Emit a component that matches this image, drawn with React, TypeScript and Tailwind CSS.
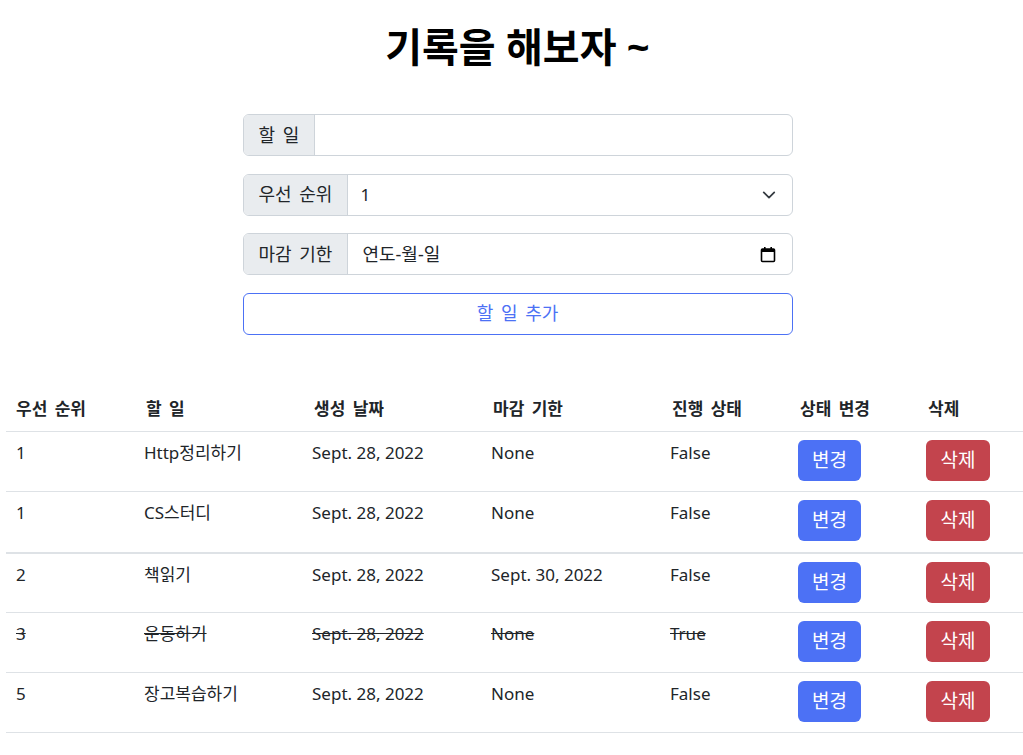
import React from 'react';

type Todo = {
  priority: number;
  title: string;
  created: string;
  due: string;
  done: boolean;
};

const todos: Todo[] = [
  { priority: 1, title: 'Http정리하기', created: 'Sept. 28, 2022', due: 'None', done: false },
  { priority: 1, title: 'CS스터디', created: 'Sept. 28, 2022', due: 'None', done: false },
  { priority: 2, title: '책읽기', created: 'Sept. 28, 2022', due: 'Sept. 30, 2022', done: false },
  { priority: 3, title: '운동하기', created: 'Sept. 28, 2022', due: 'None', done: true },
  { priority: 5, title: '장고복습하기', created: 'Sept. 28, 2022', due: 'None', done: false },
];

const headers = ['우선 순위', '할 일', '생성 날짜', '마감 기한', '진행 상태', '상태 변경', '삭제'];

function InputGroup({ label, children }: { label: string; children: React.ReactNode }) {
  return (
    <div className="flex h-[42px] w-full rounded-md border border-[#ced4da] bg-white overflow-hidden">
      <span className="flex items-center px-[15px] bg-[#e9ecef] border-r border-[#ced4da] text-[18px] text-[#212529] whitespace-nowrap [word-spacing:3px]">
        {label}
      </span>
      {children}
    </div>
  );
}

export default function App() {
  return (
    <div className="w-full min-h-screen overflow-hidden bg-white text-[#212529] font-['Noto_Sans','Noto_Sans_CJK_KR',sans-serif]">
      <div className="w-[1035px]">
        <h1 className="mt-[23px] text-center text-[40px] leading-[48px] font-bold text-black">기록을 해보자 ~</h1>

        {/* Form */}
        <div className="w-[550px] mx-auto mt-[43px] flex flex-col gap-[17.5px]">
          <InputGroup label="할 일">
            <div className="flex-1" />
          </InputGroup>
          <InputGroup label="우선 순위">
            <div className="flex-1 flex items-center justify-between pl-[12px] pr-[16px] text-[17px]">
              <span>1</span>
              <svg width="14" height="14" viewBox="0 0 16 16" fill="none" stroke="#343a40" strokeWidth="2" strokeLinecap="round" strokeLinejoin="round">
                <path d="M2 5l6 6 6-6" />
              </svg>
            </div>
          </InputGroup>
          <InputGroup label="마감 기한">
            <div className="flex-1 flex items-center justify-between pl-[14px] pr-[16px] text-[18px]">
              <span>연도-월-일</span>
              <svg width="16" height="17" viewBox="0 0 16 17" fill="none">
                <rect x="1.5" y="3" width="13" height="12.5" rx="1" stroke="#000" strokeWidth="1.6" />
                <rect x="1.5" y="3" width="13" height="3" fill="#000" />
                <rect x="4" y="1" width="1.6" height="3" fill="#000" />
                <rect x="10.4" y="1" width="1.6" height="3" fill="#000" />
              </svg>
            </div>
          </InputGroup>
          <button className="h-[42px] w-full rounded-md border border-[#4c71f5] bg-white text-[18px] text-[#4c71f5] [word-spacing:3px]">
            할 일 추가
          </button>
        </div>

        {/* Table */}
        <div className="mx-[6px] mt-[57px]">
          <table className="w-full table-fixed border-collapse text-[17px] [word-spacing:3px]">
            <colgroup>
              <col className="w-[130px]" />
              <col className="w-[168px]" />
              <col className="w-[179px]" />
              <col className="w-[179px]" />
              <col className="w-[128px]" />
              <col className="w-[128px]" />
              <col />
            </colgroup>
            <thead>
              <tr className="h-[40px] border-b border-[#dee2e6]">
                {headers.map((h) => (
                  <th key={h} className="px-[10px] pt-[4px] text-left font-bold align-top">{h}</th>
                ))}
              </tr>
            </thead>
            <tbody>
              {todos.map((t, i) => {
                const strike = t.done ? 'line-through' : '';
                return (
                  <tr key={i} className={`border-[#dee2e6] ${i === 1 ? 'h-[61px] border-b-2' : 'h-[60px] border-b'}`}>
                    <td className={`px-[10px] pt-[8px] align-top ${strike}`}>{t.priority}</td>
                    <td className={`px-[8px] pt-[8px] align-top ${strike}`}>{t.title}</td>
                    <td className={`px-[8px] pt-[8px] align-top [word-spacing:0px] ${strike}`}>{t.created}</td>
                    <td className={`px-[8px] pt-[8px] align-top [word-spacing:0px] ${strike}`}>{t.due}</td>
                    <td className={`px-[8px] pt-[8px] align-top ${strike}`}>{t.done ? 'True' : 'False'}</td>
                    <td className="px-[8px] pt-[8px] align-top">
                      <button className="h-[41px] w-[63px] rounded-md bg-[#4c71f5] text-white text-[19px]">변경</button>
                    </td>
                    <td className="px-[8px] pt-[8px] align-top">
                      <button className="h-[41px] w-[64px] rounded-md bg-[#c3444d] text-white text-[19px]">삭제</button>
                    </td>
                  </tr>
                );
              })}
            </tbody>
          </table>
        </div>
      </div>
    </div>
  );
}
